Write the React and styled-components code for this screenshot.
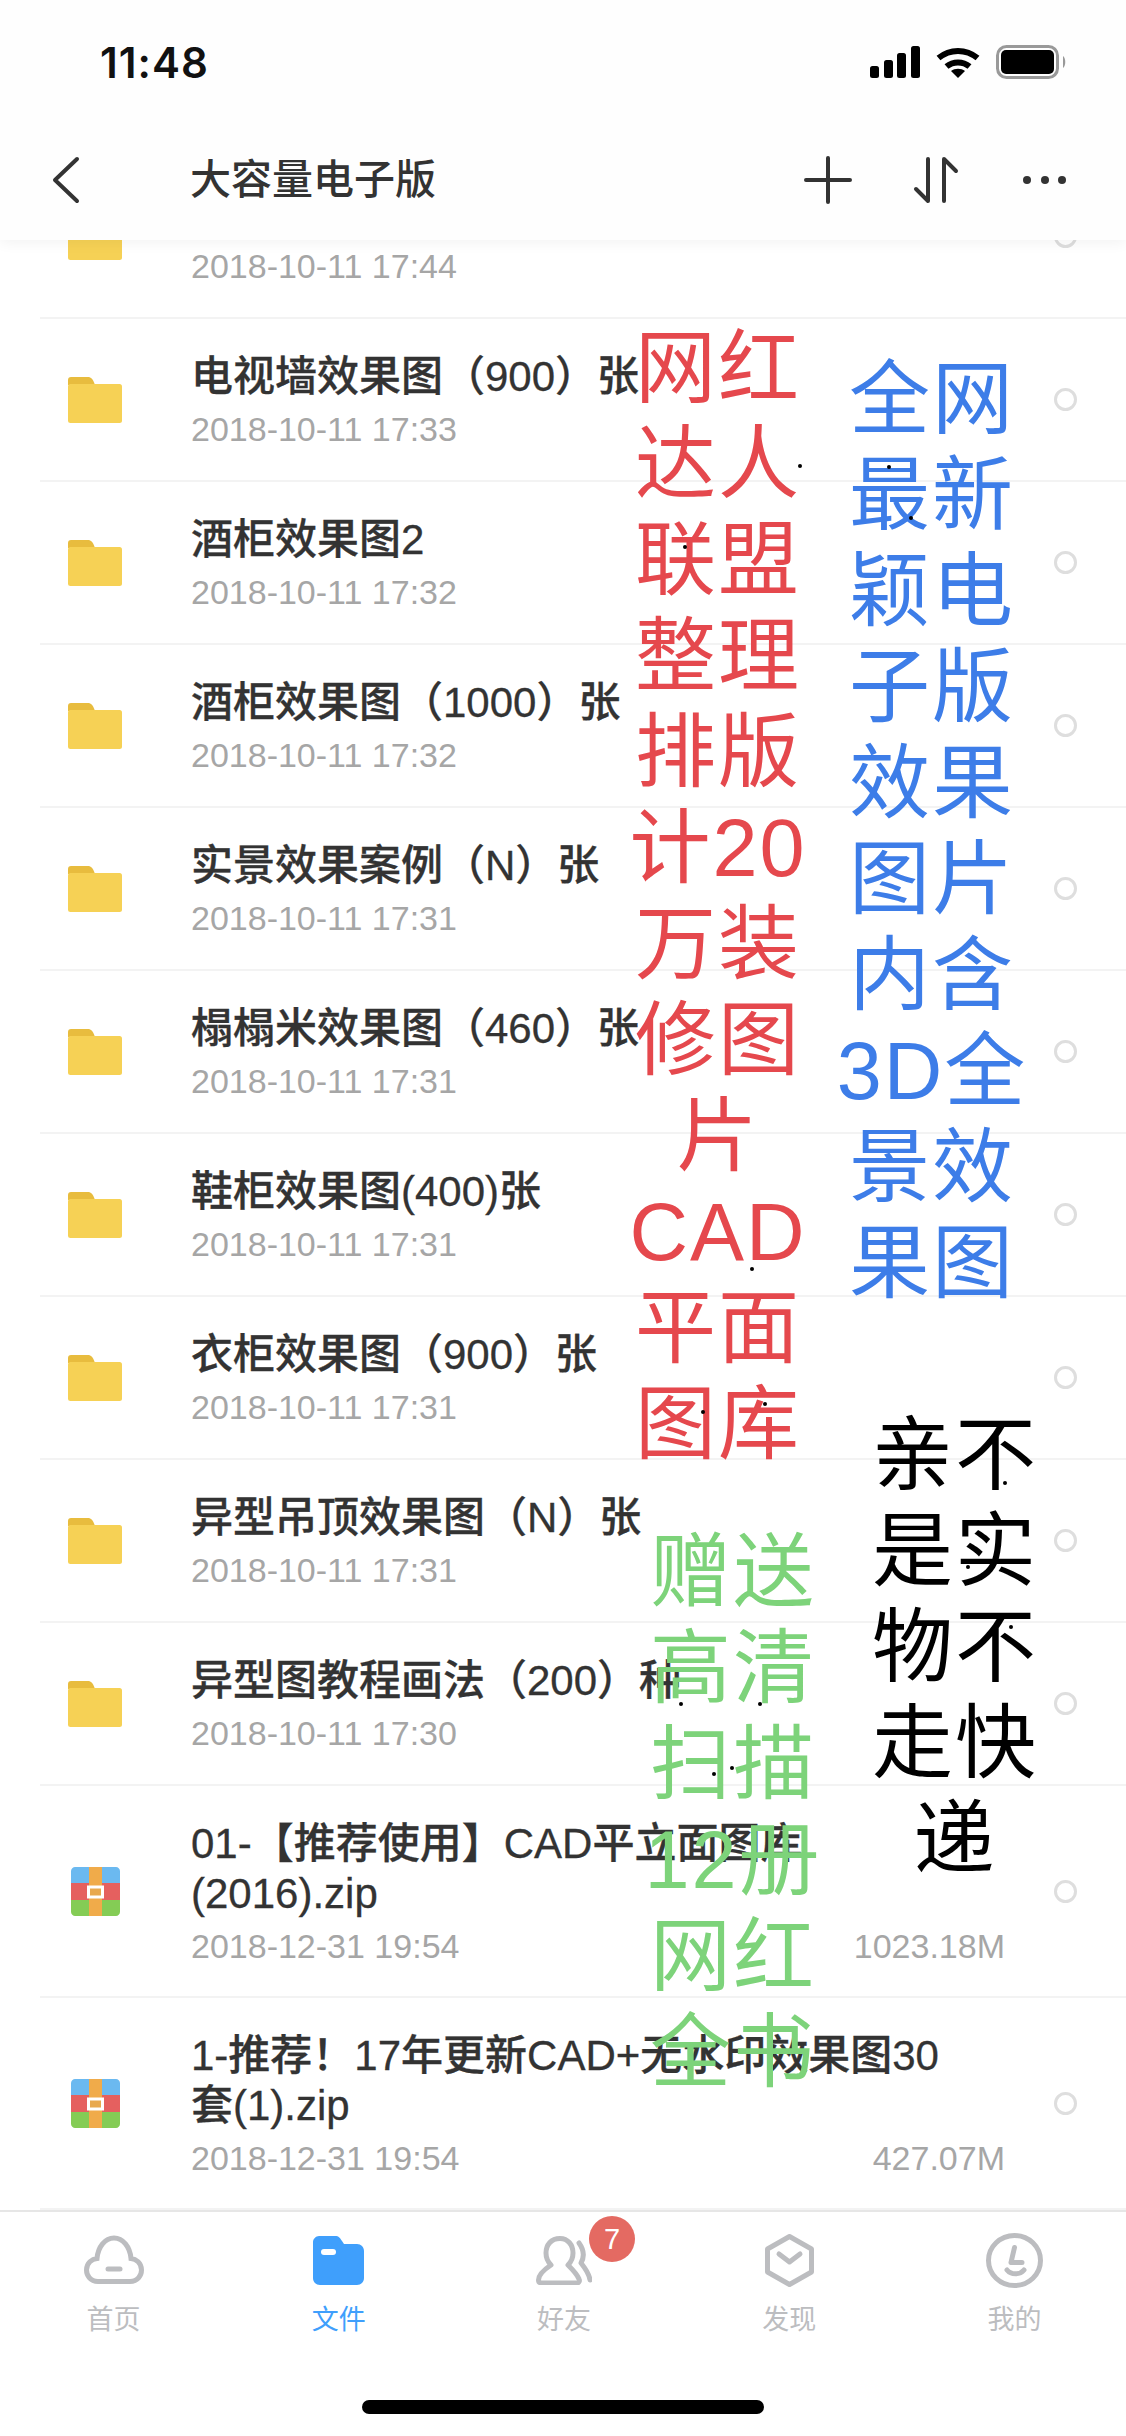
import styled, { createGlobalStyle } from 'styled-components';

const GlobalStyle = createGlobalStyle`
  html, body {
    margin: 0;
    padding: 0;
    background: #fff;
  }
  body {
    font-family: "Liberation Sans", "Noto Sans CJK SC", sans-serif;
  }
`;

const Page = styled.div`
  position: relative;
  width: 1126px;
  height: 2436px;
  display: flex;
  flex-direction: column;
  overflow: hidden;
  background: #fff;
`;

const Header = styled.header`
  position: relative;
  z-index: 2;
  height: 240px;
  flex: none;
  background: #fefefe;
  box-shadow: 0 2px 14px rgba(0, 0, 0, 0.06);
`;

const StatusBar = styled.div`
  height: 120px;
  display: flex;
  align-items: center;
  justify-content: space-between;
  padding: 4px 59px 0 100px;
  box-sizing: border-box;
`;

const Clock = styled.span`
  font-family: Inter, "Liberation Sans", sans-serif;
  font-size: 42px;
  font-weight: 600;
  letter-spacing: 1px;
  color: #111;
`;

const StatusIcons = styled.div`
  display: flex;
  align-items: center;
  gap: 16px;
`;

const NavBar = styled.div`
  height: 120px;
  display: flex;
  align-items: center;
  padding: 0 56px 0 50px;
`;

const NavTitle = styled.h1`
  margin: 0 0 0 108px;
  flex: 1;
  font-size: 41px;
  line-height: 50px;
  font-weight: 500;
  color: #333;
`;

const NavActions = styled.div`
  display: flex;
  align-items: center;
  gap: 60px;
`;

const FileList = styled.div`
  flex: 1;
  min-height: 0;
  margin-top: -84px;
`;

const Row = styled.div`
  height: ${(p) => p.$height}px;
  margin-left: 40px;
  padding: 0 48px 0 28px;
  box-sizing: border-box;
  display: flex;
  align-items: center;
  border-bottom: 2px solid #f3f3f3;
`;

const IconSlot = styled.div`
  width: 123px;
  flex: none;
  display: flex;
  padding-left: ${(p) => p.$inset || 0}px;
  box-sizing: border-box;
`;

const RowText = styled.div`
  width: 814px;
  flex: none;
  padding-top: 2px;
`;

const Title = styled.div`
  min-height: 50px;
  font-size: 42px;
  line-height: 50px;
  font-weight: 500;
  color: #333;
  white-space: pre;
  -webkit-text-stroke: 0.3px #333;
`;

const Meta = styled.div`
  margin-top: 7px;
  display: flex;
  justify-content: space-between;
  font-size: 34px;
  line-height: 40px;
  color: #a6a6a6;
`;

const Radio = styled.span`
  width: 23px;
  height: 23px;
  margin-left: auto;
  margin-right: 1px;
  flex: none;
  box-sizing: border-box;
  border: 3.5px solid #dedede;
  border-radius: 50%;
`;

const TabBar = styled.nav`
  position: relative;
  z-index: 2;
  height: 226px;
  flex: none;
  box-sizing: border-box;
  padding-top: 20px;
  display: grid;
  grid-template-columns: repeat(5, 1fr);
  align-items: start;
  background: #fff;
  border-top: 2px solid #e6e6e6;
`;

const Tab = styled.div`
  display: flex;
  flex-direction: column;
  align-items: center;
  gap: 14px;
  padding-left: 2px;
  font-size: 27px;
  line-height: 36px;
  color: ${(p) => (p.$active ? '#3f9ffc' : '#bcbdc0')};
`;

const TabIcon = styled.div`
  position: relative;
  height: 56px;
  display: flex;
  align-items: center;
  justify-content: center;
`;

const Badge = styled.span`
  position: absolute;
  left: 53px;
  top: -16px;
  width: 46px;
  height: 46px;
  border-radius: 50%;
  background: #e46a62;
  color: #fff;
  font-size: 29px;
  line-height: 46px;
  text-align: center;
`;

const HomeIndicator = styled.div`
  position: absolute;
  z-index: 3;
  left: 362px;
  bottom: 22px;
  width: 402px;
  height: 14px;
  border-radius: 7px;
  background: #000;
`;

// text pasted on top of the screenshot, it sits free over the list
const Sticker = styled.div`
  position: absolute;
  z-index: 1;
  left: ${(p) => p.$left}px;
  top: ${(p) => p.$top}px;
  width: 240px;
  font-size: 81px;
  line-height: 96px;
  letter-spacing: 2px;
  text-align: center;
  color: ${(p) => p.$color};
`;

const Speck = styled.i`
  position: absolute;
  z-index: 1;
  left: ${(p) => p.$x}px;
  top: ${(p) => p.$y}px;
  width: 4px;
  height: 4px;
  border-radius: 50%;
  background: #000;
`;

const Signal = () => (
  <svg width="50" height="32" viewBox="0 0 50 32" fill="#000">
    <rect x="0" y="20" width="9" height="12" rx="2.5" />
    <rect x="14" y="14" width="9" height="18" rx="2.5" />
    <rect x="27" y="7" width="9" height="25" rx="2.5" />
    <rect x="41" y="0" width="9" height="32" rx="2.5" />
  </svg>
);

const Wifi = () => (
  <svg width="44" height="32" viewBox="0 0 44 32" fill="none" stroke="#000" strokeWidth="6">
    <path d="M2.5 12 C14 2.5 30 2.5 41.5 12" />
    <path d="M10.5 20.5 C17 15 27 15 33.5 20.5" />
    <path d="M22 32 L15 25 C19 22 25 22 29 25 Z" fill="#000" stroke="none" />
  </svg>
);

const Battery = () => (
  <svg width="71" height="34" viewBox="0 0 71 34">
    <rect x="1.5" y="1.5" width="60" height="31" rx="9" fill="none" stroke="#999" strokeWidth="3" />
    <rect x="5" y="5" width="53" height="24" rx="5" fill="#000" />
    <path d="M67 11 C70 13 70 21 67 23 Z" fill="#999" />
  </svg>
);

const BackIcon = () => (
  <svg width="32" height="48" viewBox="0 0 32 48" fill="none" stroke="#333" strokeWidth="4" strokeLinecap="round" strokeLinejoin="round">
    <path d="M27 3 L5 24 L27 45" />
  </svg>
);

const PlusIcon = () => (
  <svg width="48" height="48" viewBox="0 0 48 48" stroke="#333" strokeWidth="4" strokeLinecap="round">
    <path d="M24 2 V46 M2 24 H46" />
  </svg>
);

const SortIcon = () => (
  <svg width="48" height="48" viewBox="0 0 48 48" fill="none" stroke="#333" strokeWidth="4" strokeLinecap="round" strokeLinejoin="round">
    <path d="M16 3 V45 L4 33" />
    <path d="M32 45 V3 L44 15" />
  </svg>
);

const MoreIcon = () => (
  <svg width="50" height="12" viewBox="0 0 50 12" fill="#333">
    <circle cx="7" cy="6" r="4" />
    <circle cx="25" cy="6" r="4" />
    <circle cx="42" cy="6" r="4" />
  </svg>
);

const FolderIcon = () => (
  <svg width="54" height="46" viewBox="0 0 54 46">
    <path d="M3 0 H20 C23 0 25 2 27 8 H0 V3 C0 1 1 0 3 0 Z" fill="#e8bc3e" />
    <rect x="0" y="7" width="54" height="39" rx="2.5" fill="#f6d155" />
  </svg>
);

const ZipIcon = () => (
  <svg width="49" height="49" viewBox="0 0 49 49">
    <path d="M4 0 H45 C47 0 49 2 49 4 V16 H0 V4 C0 2 2 0 4 0 Z" fill="#6bb9f0" />
    <rect x="0" y="16" width="49" height="17" fill="#e5605f" />
    <path d="M0 33 H49 V45 C49 47 47 49 45 49 H4 C2 49 0 47 0 45 Z" fill="#84cc55" />
    <rect x="18" y="0" width="13" height="49" fill="#f0ab4a" />
    <rect x="17.5" y="20" width="14" height="10" fill="#e8a94e" stroke="#fff" strokeWidth="3" />
  </svg>
);

const HomeTabIcon = () => (
  <svg width="60" height="50" viewBox="0 0 60 50" fill="none" stroke="#bcbdc0" strokeWidth="5" strokeLinecap="round">
    <path d="M14 46.5 C6 46.5 2.5 40 2.5 35 C2.5 28 8 24 13 23.5 C14 12 21 3 30 3 C39 3 46 12 47 23.5 C52 24 57.5 28 57.5 35 C57.5 40 54 46.5 46 46.5 Z" />
    <path d="M24 34 H36" />
  </svg>
);

const FilesTabIcon = () => (
  <svg width="51" height="49" viewBox="0 0 51 49">
    <path d="M6 0 H22 C26 0 27 2 29 5 L31 8 H44 C48 8 51 11 51 15 V42 C51 46 48 49 44 49 H7 C3 49 0 46 0 42 V6 C0 3 3 0 6 0 Z" fill="#3f9ffc" />
    <rect x="8" y="13" width="15" height="6" rx="3" fill="#fff" />
  </svg>
);

const FriendsTabIcon = () => (
  <svg width="56" height="49" viewBox="0 0 56 49" fill="none" stroke="#bcbdc0" strokeWidth="5" strokeLinecap="round" strokeLinejoin="round">
    <path d="M24 2.5 C15 2.5 10 9 10 17 C10 22 12 26 15 29 C9 33 2.5 39 2.5 44 C2.5 46 4 47 6 47 H41 C43 47 44 45 43 43 C41 38 36 33 32 29 C35 26 37 22 37 17 C37 9 32 2.5 24 2.5 Z" />
    <path d="M43 7 C48 14 49 20 45 27 C49 32 53 37 54 44" />
  </svg>
);

const DiscoverTabIcon = () => (
  <svg width="49" height="53" viewBox="0 0 49 53" fill="none" stroke="#bcbdc0" strokeWidth="5" strokeLinecap="round" strokeLinejoin="round">
    <path d="M24.5 2.5 L46.5 15 V38 L24.5 50.5 L2.5 38 V15 Z" />
    <path d="M14 20 L24.5 28 L35 20" />
  </svg>
);

const MeTabIcon = () => (
  <svg width="57" height="55" viewBox="0 0 57 55" fill="none" stroke="#bcbdc0" strokeWidth="5" strokeLinecap="round" strokeLinejoin="round">
    <ellipse cx="28.5" cy="27.5" rx="26" ry="25" />
    <path d="M28.5 14.5 L25 29.5 H36" />
    <path d="M21 37 C25 42 34 42 38 37" />
  </svg>
);

const files = [
  { title: '', date: '2018-10-11 17:44' },
  { title: '电视墙效果图（900）张', date: '2018-10-11 17:33' },
  { title: '酒柜效果图2', date: '2018-10-11 17:32' },
  { title: '酒柜效果图（1000）张', date: '2018-10-11 17:32' },
  { title: '实景效果案例（N）张', date: '2018-10-11 17:31' },
  { title: '榻榻米效果图（460）张', date: '2018-10-11 17:31' },
  { title: '鞋柜效果图(400)张', date: '2018-10-11 17:31' },
  { title: '衣柜效果图（900）张', date: '2018-10-11 17:31' },
  { title: '异型吊顶效果图（N）张', date: '2018-10-11 17:31' },
  { title: '异型图教程画法（200）种', date: '2018-10-11 17:30' },
  { title: '01-【推荐使用】CAD平立面图库\n(2016).zip', date: '2018-12-31 19:54', size: '1023.18M', zip: true },
  { title: '1-推荐！17年更新CAD+无水印效果图30\n套(1).zip', date: '2018-12-31 19:54', size: '427.07M', zip: true },
];

const stickers = [
  { color: '#e5484d', left: 598, top: 320, lines: ['网红', '达人', '联盟', '整理', '排版', '计20', '万装', '修图', '片', 'CAD', '平面', '图库'] },
  { color: '#3d7de8', left: 812, top: 351, lines: ['全网', '最新', '颖电', '子版', '效果', '图片', '内含', '3D全', '景效', '果图'] },
  { color: '#000', left: 835, top: 1407, lines: ['亲不', '是实', '物不', '走快', '递'] },
  { color: '#7dd37a', left: 613, top: 1524, lines: ['赠送', '高清', '扫描', '12册', '网红', '全书'] },
];

const specks = [
  [798, 464], [887, 465], [909, 516], [683, 545], [750, 1267], [701, 1410], [763, 1402],
  [1003, 1481], [966, 1565], [1009, 1625], [679, 1702], [758, 1702], [712, 1772], [730, 1766],
];

const tabs = [
  { label: '首页', icon: <HomeTabIcon /> },
  { label: '文件', icon: <FilesTabIcon />, active: true },
  { label: '好友', icon: <FriendsTabIcon />, badge: 7 },
  { label: '发现', icon: <DiscoverTabIcon /> },
  { label: '我的', icon: <MeTabIcon /> },
];

export default function App() {
  return (
    <Page>
      <GlobalStyle />
      <Header>
        <StatusBar>
          <Clock>11:48</Clock>
          <StatusIcons>
            <Signal />
            <Wifi />
            <Battery />
          </StatusIcons>
        </StatusBar>
        <NavBar>
          <BackIcon />
          <NavTitle>大容量电子版</NavTitle>
          <NavActions>
            <PlusIcon />
            <SortIcon />
            <MoreIcon />
          </NavActions>
        </NavBar>
      </Header>

      <FileList>
        {files.map((file) => (
          <Row key={file.date + file.title} $height={file.zip ? 212 : 163}>
            <IconSlot $inset={file.zip ? 3 : 0}>{file.zip ? <ZipIcon /> : <FolderIcon />}</IconSlot>
            <RowText>
              <Title>{file.title}</Title>
              <Meta>
                <span>{file.date}</span>
                {file.size && <span>{file.size}</span>}
              </Meta>
            </RowText>
            <Radio />
          </Row>
        ))}
      </FileList>

      <TabBar>
        {tabs.map((tab) => (
          <Tab key={tab.label} $active={tab.active}>
            <TabIcon>
              {tab.icon}
              {tab.badge && <Badge>{tab.badge}</Badge>}
            </TabIcon>
            {tab.label}
          </Tab>
        ))}
      </TabBar>
      <HomeIndicator />

      {stickers.map((s) => (
        <Sticker key={s.color} $color={s.color} $left={s.left} $top={s.top}>
          {s.lines.map((line, i) => (
            <div key={i}>{line}</div>
          ))}
        </Sticker>
      ))}
      {specks.map(([x, y]) => (
        <Speck key={`${x}-${y}`} $x={x} $y={y} />
      ))}
    </Page>
  );
}
